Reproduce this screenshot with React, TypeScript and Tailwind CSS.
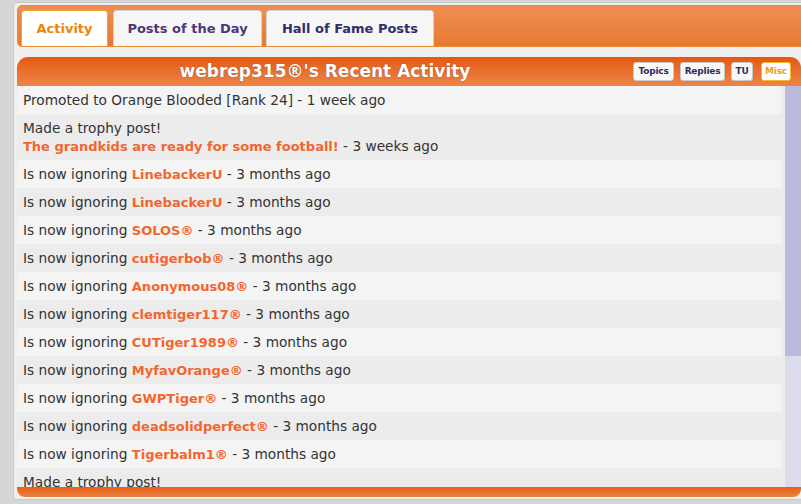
const rows: { pre: string; link?: string; post: string; trophy?: boolean }[] = [
  { pre: "Promoted to Orange Blooded [Rank 24]", post: " - 1 week ago" },
  { pre: "Made a trophy post!", link: "The grandkids are ready for some football!", post: " - 3 weeks ago", trophy: true },
  { pre: "Is now ignoring ", link: "LinebackerU", post: " - 3 months ago" },
  { pre: "Is now ignoring ", link: "LinebackerU", post: " - 3 months ago" },
  { pre: "Is now ignoring ", link: "SOLOS®", post: " - 3 months ago" },
  { pre: "Is now ignoring ", link: "cutigerbob®", post: " - 3 months ago" },
  { pre: "Is now ignoring ", link: "Anonymous08®", post: " - 3 months ago" },
  { pre: "Is now ignoring ", link: "clemtiger117®", post: " - 3 months ago" },
  { pre: "Is now ignoring ", link: "CUTiger1989®", post: " - 3 months ago" },
  { pre: "Is now ignoring ", link: "MyfavOrange®", post: " - 3 months ago" },
  { pre: "Is now ignoring ", link: "GWPTiger®", post: " - 3 months ago" },
  { pre: "Is now ignoring ", link: "deadsolidperfect®", post: " - 3 months ago" },
  { pre: "Is now ignoring ", link: "Tigerbalm1®", post: " - 3 months ago" },
  { pre: "Made a trophy post!", post: "" },
];

const tabs = ["Activity", "Posts of the Day", "Hall of Fame Posts"];

// filter buttons in the panel header, widths taken from the screenshot
const filters = [
  { label: "Topics", cls: "w-[41px]" },
  { label: "Replies", cls: "ml-[6px] w-[45px]" },
  { label: "TU", cls: "ml-[6px] w-[22px]" },
  { label: "Misc", cls: "ml-[8px] w-[30px]" },
];

export default function App() {
  return (
    <div className="h-[504px] w-[801px] overflow-hidden bg-[#d6d6d6] pl-[13px] pt-[2px] font-['DejaVu_Sans',sans-serif]">
      <div className="w-[800px] rounded-[4px] border border-[#c9c9c9] bg-[#efefef] pl-[3px] pt-[2px] pb-[2px]">
        {/* tab strip */}
        <div className="flex h-[42px] items-end gap-[5px] rounded-[5px] border border-[#e88b35] bg-gradient-to-b from-[#ee8e52] to-[#e8792f] pl-[3px]">
          {tabs.map((t, i) => (
            <div
              key={t}
              className={`flex h-[36px] items-center justify-center rounded-t-[4px] border border-b-0 text-[13px] font-bold ${
                i === 0
                  ? "w-[87px] border-[#f2a628] bg-white text-[#e8850f]"
                  : i === 1
                  ? "w-[149px] border-[#d2d2d2] bg-[#f6f6f6] text-[#4a3a78]"
                  : "ml-[-1px] w-[168px] border-[#d2d2d2] bg-[#f6f6f6] text-[#2f2f68]"
              }`}
            >
              {t}
            </div>
          ))}
        </div>

        {/* panel */}
        <div className="mt-[10px] w-[784px]">
          <div className="flex h-[29px] items-center rounded-t-[11px] bg-gradient-to-b from-[#e5580a] to-[#ec8547] pr-[10px]">
            <div className="flex-1 text-center text-[17px] font-bold text-white [text-shadow:0_0_1px_#7a3a10]">
              webrep315®'s Recent Activity
            </div>
            <div className="flex items-center">
              {filters.map((f) => (
                <span
                  key={f.label}
                  className={`flex h-[19px] items-center justify-center rounded-[3px] border text-[9px] font-bold tracking-[-0.2px] ${f.cls} ${
                    f.label === "Misc"
                      ? "border-[#f5b52e] bg-white text-[#f0a020]"
                      : "border-[#c8c8c8] bg-[#f7f7f7] text-[#2e2e5e]"
                  }`}
                >
                  {f.label}
                </span>
              ))}
            </div>
          </div>

          <div className="flex h-[401px] bg-[#ececec]">
            <div className="flex-1 overflow-hidden">
              {rows.map((r, i) => (
                <div
                  key={i}
                  className={`mr-[4px] overflow-hidden px-[6px] py-[5px] text-[13.7px] leading-[18px] text-[#333333] ${
                    r.trophy ? "h-[46px]" : "h-[28px]"
                  } ${i % 2 === 0 ? "bg-[#f4f4f4]" : "bg-[#ececec]"}`}
                >
                  {r.trophy ? (
                    <>
                      <div className="h-[18px]">{r.pre}</div>
                      <div className="h-[18px]">
                        <span className="text-[13px] font-bold leading-[18px] text-[#f2662f]">{r.link}</span>
                        {r.post}
                      </div>
                    </>
                  ) : (
                    <div className="h-[18px]">
                      {r.pre}
                      {r.link && (
                        <span className="text-[13px] font-bold leading-[18px] text-[#f2662f]">{r.link}</span>
                      )}
                      {r.post}
                    </div>
                  )}
                </div>
              ))}
            </div>
            {/* scrollbar */}
            <div className="flex w-[16px] flex-col bg-[#dcdcec]">
              <div className="h-[270px] bg-[#babadc]" />
            </div>
          </div>

          <div className="h-[10px] rounded-b-[8px] bg-gradient-to-b from-[#e55f10] to-[#ec8040]" />
        </div>
      </div>
    </div>
  );
}
